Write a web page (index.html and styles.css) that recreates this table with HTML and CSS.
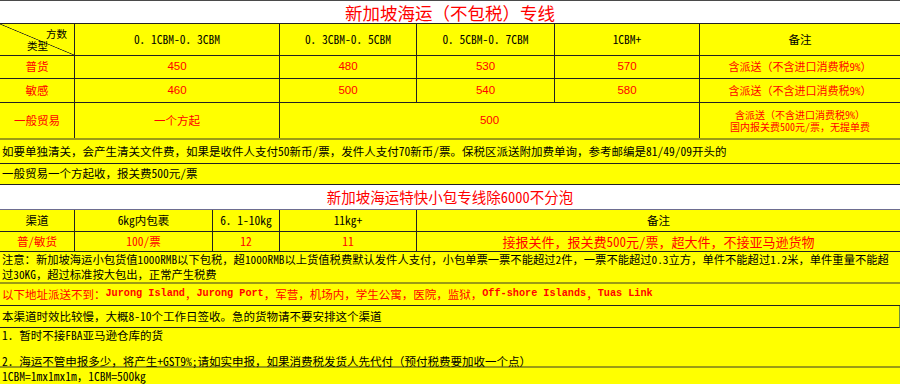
FILE: index.html
```html
<!DOCTYPE html>
<html lang="zh-CN">
<head>
<meta charset="utf-8">
<title>新加坡海运专线</title>
<link rel="stylesheet" href="styles.css">
</head>
<body>
<div class="sheet">
  <div class="title title-1">新加坡海运（不包税）专线</div>

  <div class="row g1 r-head">
    <div class="cell diag"><span class="dg-top">方数</span><span class="dg-bot">类型</span></div>
    <div class="cell">0．1CBM-0．3CBM</div>
    <div class="cell">0．3CBM-0．5CBM</div>
    <div class="cell">0．5CBM-0．7CBM</div>
    <div class="cell">1CBM+</div>
    <div class="cell last">备注</div>
  </div>

  <div class="row g1 r-23 red">
    <div class="cell">普货</div>
    <div class="cell num">450</div>
    <div class="cell num">480</div>
    <div class="cell num">530</div>
    <div class="cell num">570</div>
    <div class="cell last small">含派送（不含进口消费税9%）</div>
  </div>

  <div class="row g1 r-24 red">
    <div class="cell">敏感</div>
    <div class="cell num">460</div>
    <div class="cell num">500</div>
    <div class="cell num">540</div>
    <div class="cell num">580</div>
    <div class="cell last small">含派送（不含进口消费税9%）</div>
  </div>

  <div class="row g1 r-37 red olive">
    <div class="cell">一般贸易</div>
    <div class="cell">一个方起</div>
    <div class="cell span3 num">500</div>
    <div class="cell last lines-12">含派送（不含进口消费税9%）<br>国内报关费500元/票，无提单费</div>
  </div>

  <div class="row full r-24">
    <div class="cell left">如要单独清关，会产生清关文件费，如果是收件人支付50新币/票，发件人支付70新币/票。保税区派送附加费单询，参考邮编是81/49/09开头的</div>
  </div>

  <div class="row full r-21">
    <div class="cell left">一般贸易一个方起收，报关费500元/票</div>
  </div>

  <div class="title title-2">新加坡海运特快小包专线除6000不分泡</div>

  <div class="row g2 r-22">
    <div class="cell">渠道</div>
    <div class="cell">6kg内包裹</div>
    <div class="cell">6．1-10kg</div>
    <div class="cell">11kg+</div>
    <div class="cell last">备注</div>
  </div>

  <div class="row g2 r-20 red">
    <div class="cell">普/敏货</div>
    <div class="cell">100/票</div>
    <div class="cell">12</div>
    <div class="cell">11</div>
    <div class="cell last big">接报关件，报关费500元/票，超大件，不接亚马逊货物</div>
  </div>

  <div class="row full r-32 olive">
    <div class="cell left lines-15 note">注意：新加坡海运小包货值1000RMB以下包税，超1000RMB以上货值税费默认发件人支付，小包单票一票不能超过2件，一票不能超过0.3立方，单件不能超过1.2米，单件重量不能超<br>过30KG，超过标准按大包出，正常产生税费</div>
  </div>

  <div class="row full r-22 red">
    <div class="cell left">以下地址派送不到：<span class="lat">Jurong Island</span>，<span class="lat">Jurong Port </span>，军营，机场内，学生公寓，医院，监狱，<span class="lat">Off-shore Islands</span>，<span class="lat">Tuas Link</span></div>
  </div>

  <div class="row full r-22 edge">
    <div class="cell left">本渠道时效比较慢，大概8-10个工作日签收。急的货物请不要安排这个渠道</div>
  </div>

  <div class="row full r-40 olive">
    <div class="cell left top lines-13">1．暂时不接FBA亚马逊仓库的货<br><br>2．海运不管申报多少，将产生+GST9%;请如实申报，如果消费税发货人先代付（预付税费要加收一个点）</div>
  </div>

  <div class="row full r-last">
    <div class="cell left low">1CBM=1mx1mx1m，1CBM=500kg</div>
  </div>
</div>
</body>
</html>
```

FILE: styles.css
```css
html, body {
  margin: 0;
  padding: 0;
  background: #ffffff;
}

.sheet {
  width: 900px;
  font-family: "Noto Sans Mono CJK SC", "Noto Sans CJK SC", sans-serif;
  font-size: 11.5px;
  color: #000000;
  line-height: 1.2;
}

.title {
  box-sizing: border-box;
  display: flex;
  align-items: center;
  justify-content: center;
  background: #ffffff;
  color: #ff0000;
}

.title-1 {
  height: 24px;
  border-top: 1px solid #4a4a4a;
  border-bottom: 1px solid #222222;
  font-size: 17.5px;
}

.title-2 {
  height: 25px;
  border-bottom: 1px solid #6d6d90;
  font-size: 14.5px;
}

.row {
  box-sizing: border-box;
  display: grid;
  background: #ffff00;
  border-bottom: 1px solid #222222;
}

.g1 { grid-template-columns: 75px 205px 137px 138px 145px 200px; }
.g2 { grid-template-columns: 75px 138px 67px 137px 483px; }
.full { grid-template-columns: 900px; }

.r-head { height: 32px; }
.r-20 { height: 20px; }
.r-21 { height: 21px; }
.r-22 { height: 22px; }
.r-23 { height: 23px; }
.r-24 { height: 24px; }
.r-32 { height: 32px; }
.r-37 { height: 37px; }
.r-40 { height: 40px; }
.r-last { height: 17px; border-bottom: none; }

.olive { border-bottom: 2px solid #9c9c14; }
.edge { border-right: 1px solid #6f8f3a; }

.cell {
  box-sizing: border-box;
  display: flex;
  align-items: center;
  justify-content: center;
  text-align: center;
  border-right: 1px solid #222222;
  white-space: nowrap;
}

.cell.last,
.full .cell { border-right: none; }

.cell.left {
  justify-content: flex-start;
  text-align: left;
  padding-left: 2px;
}

.cell.top {
  align-items: flex-start;
  padding-top: 1px;
}

.cell.low {
  align-items: flex-start;
  padding-top: 2px;
}

.span3 { grid-column: span 3; }

.red { color: #ff0000; }

.num {
  font-family: "Liberation Sans", "Noto Sans CJK SC", sans-serif;
  font-size: 11.5px;
}

.small { font-size: 11px; }
.big { font-size: 13px; }
.note { font-size: 11.3px; }

.lines-12 { line-height: 12px; font-size: 10px; }
.lines-13 { line-height: 13px; }
.lines-15 { line-height: 15px; }

.lat {
  font-family: "Liberation Mono", monospace;
  font-weight: bold;
  font-size: 10.2px;
}

.diag {
  position: relative;
  background: linear-gradient(to top right, transparent calc(50% - 0.7px), #222222 50%, transparent calc(50% + 0.7px));
  font-size: 10.5px;
}

.dg-top {
  position: absolute;
  top: 4px;
  right: 7px;
}

.dg-bot {
  position: absolute;
  bottom: 2px;
  left: 27px;
}
```
